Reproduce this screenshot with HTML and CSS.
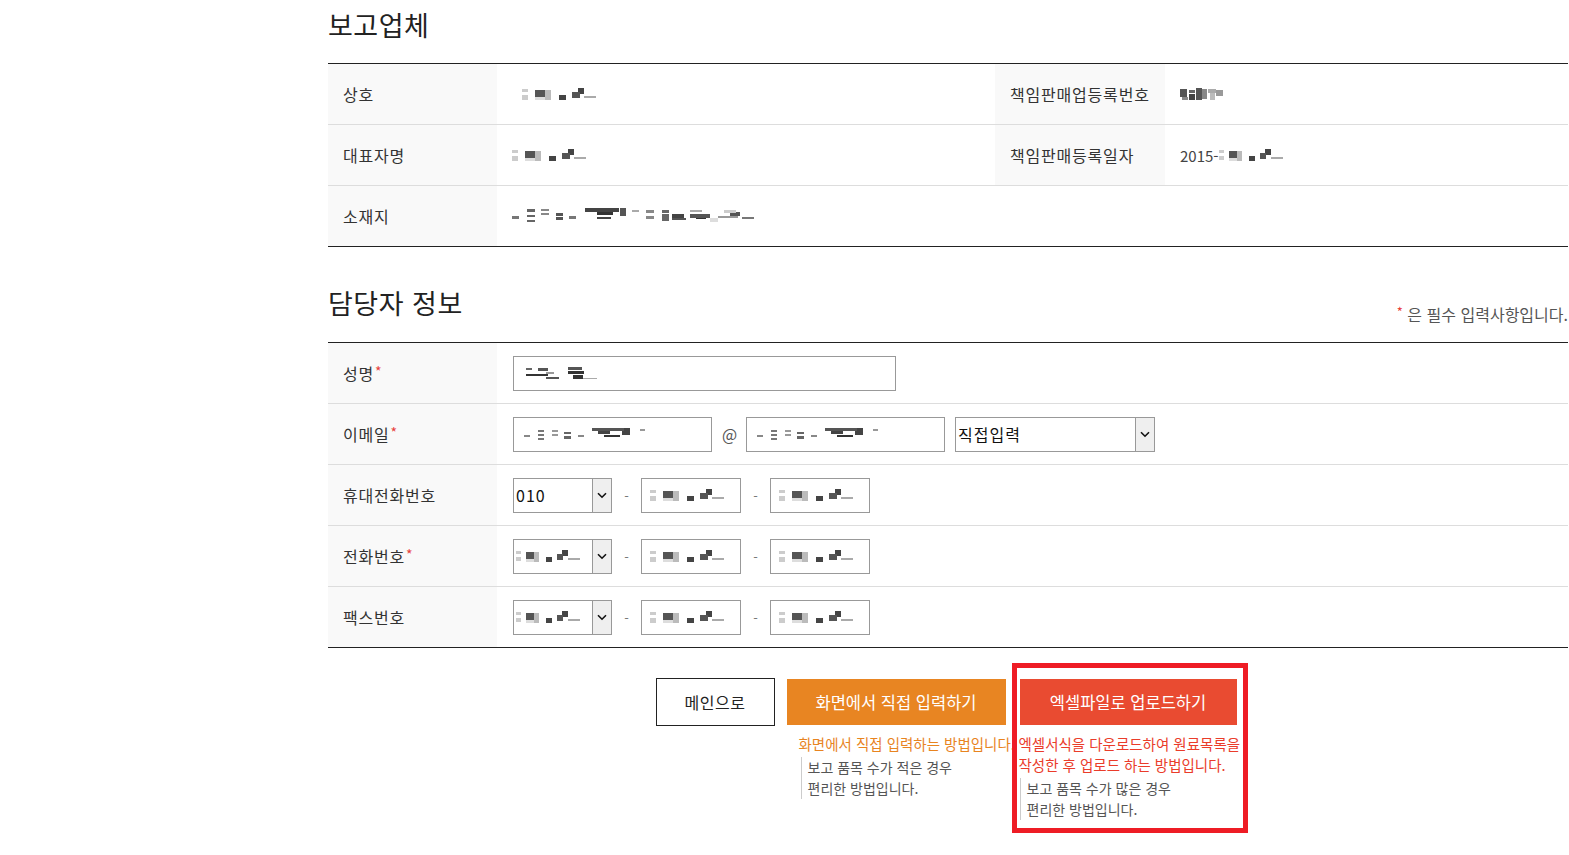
FILE: index.html
```html
<!DOCTYPE html>
<html lang="ko">
<head>
    <meta charset="UTF-8">
    <meta name="viewport" content="width=device-width, initial-scale=1.0">
    <title>보고업체</title>
    <link rel="stylesheet" href="styles.css">
</head>
<body>
    <div class="container">
        <section class="company">
            <h2 class="sec-title">보고업체</h2>
            <div class="info-table">
                <div class="info-row">
                    <div class="th">상호</div>
                    <div class="td"><span class="blot blot-a name-gap"></span></div>
                    <div class="th">책임판매업등록번호</div>
                    <div class="td"><span class="blot blot-e"></span></div>
                </div>
                <div class="info-row">
                    <div class="th">대표자명</div>
                    <div class="td"><span class="blot blot-a"></span></div>
                    <div class="th">책임판매등록일자</div>
                    <div class="td">2015-<span class="blot blot-s"></span></div>
                </div>
                <div class="info-row">
                    <div class="th">소재지</div>
                    <div class="td wide"><span class="blot blot-c"></span></div>
                </div>
            </div>
        </section>

        <section class="manager">
            <div class="sec-head">
                <h2 class="sec-title">담당자 정보</h2>
                <p class="note"><span class="req">*</span> 은 필수 입력사항입니다.</p>
            </div>
            <div class="form-table">
                <div class="form-row">
                    <div class="th">성명<span class="req">*</span></div>
                    <div class="td">
                        <div class="input input-name"><span class="blot blot-d"></span></div>
                    </div>
                </div>
                <div class="form-row">
                    <div class="th">이메일<span class="req">*</span></div>
                    <div class="td">
                        <div class="input input-mail"><span class="blot blot-b"></span></div>
                        <span class="at">@</span>
                        <div class="input input-mail"><span class="blot blot-b"></span></div>
                        <div class="select select-wide">
                            <span class="select-text">직접입력</span>
                            <span class="select-arrow"><svg width="10" height="7" viewBox="0 0 10 7"><path d="M1 1.2l4 4 4-4" fill="none" stroke="#111" stroke-width="1.6"/></svg></span>
                        </div>
                    </div>
                </div>
                <div class="form-row">
                    <div class="th">휴대전화번호</div>
                    <div class="td">
                        <div class="select">
                            <span class="select-text">010</span>
                            <span class="select-arrow"><svg width="10" height="7" viewBox="0 0 10 7"><path d="M1 1.2l4 4 4-4" fill="none" stroke="#111" stroke-width="1.6"/></svg></span>
                        </div>
                        <span class="dash">-</span>
                        <div class="input input-tel"><span class="blot blot-a"></span></div>
                        <span class="dash">-</span>
                        <div class="input input-tel"><span class="blot blot-a"></span></div>
                    </div>
                </div>
                <div class="form-row">
                    <div class="th">전화번호<span class="req">*</span></div>
                    <div class="td">
                        <div class="select">
                            <span class="select-text"><span class="blot blot-s"></span></span>
                            <span class="select-arrow"><svg width="10" height="7" viewBox="0 0 10 7"><path d="M1 1.2l4 4 4-4" fill="none" stroke="#111" stroke-width="1.6"/></svg></span>
                        </div>
                        <span class="dash">-</span>
                        <div class="input input-tel"><span class="blot blot-a"></span></div>
                        <span class="dash">-</span>
                        <div class="input input-tel"><span class="blot blot-a"></span></div>
                    </div>
                </div>
                <div class="form-row">
                    <div class="th">팩스번호</div>
                    <div class="td">
                        <div class="select">
                            <span class="select-text"><span class="blot blot-s"></span></span>
                            <span class="select-arrow"><svg width="10" height="7" viewBox="0 0 10 7"><path d="M1 1.2l4 4 4-4" fill="none" stroke="#111" stroke-width="1.6"/></svg></span>
                        </div>
                        <span class="dash">-</span>
                        <div class="input input-tel"><span class="blot blot-a"></span></div>
                        <span class="dash">-</span>
                        <div class="input input-tel"><span class="blot blot-a"></span></div>
                    </div>
                </div>
            </div>
        </section>

        <div class="btn-area">
            <div class="btn-col col-main">
                <button class="btn btn-line">메인으로</button>
            </div>
            <div class="btn-col col-direct">
                <button class="btn btn-orange">화면에서 직접 입력하기</button>
                <div class="desc desc-direct">
                    <p class="desc-title orange">화면에서 직접 입력하는 방법입니다.</p>
                    <p class="desc-sub">보고 품목 수가 적은 경우<br>편리한 방법입니다.</p>
                </div>
            </div>
            <div class="btn-col col-excel">
                <button class="btn btn-red">엑셀파일로 업로드하기</button>
                <div class="desc desc-excel">
                    <p class="desc-title red">엑셀서식을 다운로드하여 원료목록을<br>작성한 후 업로드 하는 방법입니다.</p>
                    <p class="desc-sub">보고 품목 수가 많은 경우<br>편리한 방법입니다.</p>
                </div>
            </div>
        </div>
    </div>
</body>
</html>
```

FILE: styles.css
```css
body {
    margin: 0;
    padding: 0;
    background: #fff;
    color: #333;
    font-family: "Noto Sans CJK KR", "Noto Sans", sans-serif;
    overflow-x: hidden;
}
p {
    margin: 0;
}
.container {
    width: 1240px;
    margin-left: 328px;
}
.sec-title {
    margin: 7px 0 20px;
    font-size: 27px;
    font-weight: 400;
    letter-spacing: 0.5px;
    line-height: 36px;
    color: #222;
}

/* 보고업체 */
.info-table,
.form-table {
    border-top: 1px solid #222;
    border-bottom: 1px solid #222;
}
.info-row {
    display: grid;
    grid-template-columns: 169px 498px 170px 1fr;
    height: 60px;
}
.info-row + .info-row,
.form-row + .form-row {
    border-top: 1px solid #ddd;
}
.th {
    display: flex;
    align-items: center;
    padding-left: 15px;
    background: #f9f9f9;
    font-size: 16px;
    letter-spacing: 0.8px;
    color: #333;
}
.td {
    display: flex;
    align-items: center;
    padding-left: 15px;
    font-size: 15px;
    color: #444;
}
.td.wide {
    grid-column: span 3;
}
.name-gap {
    margin-left: 10px;
    width: 86px;
}
.req {
    color: #e8413c;
    font-size: 14px;
    letter-spacing: 0;
    align-self: flex-start;
    margin-top: 21px;
    line-height: 14px;
}

/* 담당자 정보 */
.manager {
    margin-top: 38px;
}
.sec-head {
    display: flex;
    justify-content: space-between;
    align-items: flex-end;
    margin-bottom: 17px;
}
.sec-head .sec-title {
    margin: 0 0 4px;
}
.note {
    font-size: 16px;
    line-height: 22px;
    color: #555;
    white-space: nowrap;
}
.note .req {
    margin: 0;
    vertical-align: top;
    font-size: 13px;
    line-height: 18px;
}
.form-row {
    display: grid;
    grid-template-columns: 169px 1fr;
    height: 60px;
}
.form-row .th .req {
    margin-left: 1px;
}
.form-row .td {
    padding-left: 16px;
    gap: 10px;
}
.input {
    box-sizing: border-box;
    height: 35px;
    border: 1px solid #999;
    display: flex;
    align-items: center;
    padding-left: 10px;
    background: #fff;
}
.input-name {
    width: 383px;
    padding-left: 12px;
}
.input-mail {
    width: 199px;
}
.input-tel {
    width: 100px;
    padding-left: 8px;
}
.at {
    font-size: 16px;
    color: #555;
    width: 14px;
    text-align: center;
}
.dash {
    font-size: 13px;
    color: #777;
    width: 5px;
    margin: 0 2px;
    text-align: center;
}
.select {
    box-sizing: border-box;
    width: 99px;
    height: 35px;
    border: 1px solid #999;
    display: flex;
    background: #fff;
}
.select-wide {
    width: 200px;
}
.select-text {
    flex: 1;
    display: flex;
    align-items: center;
    padding-left: 2px;
    font-size: 16px;
    letter-spacing: 1px;
    color: #111;
}
.select-arrow {
    width: 18px;
    border-left: 1px solid #999;
    background: #efefef;
    display: flex;
    align-items: center;
    justify-content: center;
}

/* buttons */
.btn-area {
    display: flex;
    justify-content: center;
    align-items: flex-start;
    margin-top: 15px;
    padding-left: 7px;
}
.btn-col {
    padding-top: 16px;
}
.col-main {
    padding-top: 15px;
    margin-right: 12px;
}
.col-direct {
    width: 219px;
    margin-right: 6px;
}
.col-excel {
    border: 5px solid #ee1c25;
    padding: 11px 6px 8px 3px;
    width: 217px;
}
.btn {
    display: flex;
    align-items: center;
    justify-content: center;
    box-sizing: border-box;
    border: none;
    margin: 0;
    font-family: inherit;
    cursor: pointer;
}
.btn-line {
    width: 119px;
    height: 48px;
    border: 1px solid #222;
    background: #fff;
    color: #222;
    font-size: 16px;
    letter-spacing: 0.5px;
}
.btn-orange,
.btn-red {
    width: 100%;
    height: 46px;
    color: #fff;
    font-size: 16.5px;
}
.btn-orange {
    background: #e88522;
}
.btn-red {
    background: #e94b31;
}
.desc {
    margin-top: 8px;
    font-size: 14.5px;
    line-height: 21px;
    white-space: nowrap;
}
.desc-direct {
    margin-left: 12px;
}
.desc-excel {
    margin-left: -1px;
}
.orange {
    color: #e8841f;
}
.red {
    color: #ea3c2a;
}
.desc-sub {
    margin-top: 3px;
    margin-left: 2px;
    padding-left: 6px;
    border-left: 1px solid #ccc;
    font-size: 14px;
    color: #555;
}
.desc-excel .desc-sub {
    margin-left: 1px;
}

/* blurred values */
.blot {
    display: inline-block;
    vertical-align: middle;
    height: 14px;
    background-repeat: no-repeat;
}
.blot-a {
    width: 80px;
    background-image: linear-gradient(#ccc, #ccc), linear-gradient(#ccc, #ccc), linear-gradient(#555, #555), linear-gradient(#ddd, #ddd), linear-gradient(#bbb, #bbb), linear-gradient(#444, #444), linear-gradient(#555, #555), linear-gradient(#444, #444), linear-gradient(#aaa, #aaa);
    background-position: 0 2px, 0 8px, 13px 3px, 13px 10px, 23px 3px, 37px 8px, 50px 5px, 56px 1px, 62px 9px;
    background-size: 6px 3px, 6px 5px, 10px 7px, 10px 3px, 6px 10px, 7px 5px, 8px 6px, 6px 6px, 12px 2px;
}
.blot-s {
    width: 66px;
    background-image: linear-gradient(#ccc, #ccc), linear-gradient(#ccc, #ccc), linear-gradient(#555, #555), linear-gradient(#ddd, #ddd), linear-gradient(#bbb, #bbb), linear-gradient(#444, #444), linear-gradient(#555, #555), linear-gradient(#444, #444), linear-gradient(#aaa, #aaa);
    background-position: 0 2px, 0 8px, 10px 3px, 10px 10px, 18px 3px, 30px 8px, 41px 5px, 46px 1px, 52px 9px;
    background-size: 5px 3px, 5px 4px, 8px 7px, 8px 3px, 5px 10px, 6px 5px, 6px 6px, 6px 6px, 12px 2px;
}
.blot-b {
    width: 122px;
    background-image: linear-gradient(#888, #888), linear-gradient(#777, #777), linear-gradient(#777, #777), linear-gradient(#777, #777), linear-gradient(#999, #999), linear-gradient(#999, #999), linear-gradient(#666, #666), linear-gradient(#666, #666), linear-gradient(#888, #888), linear-gradient(#555, #555), linear-gradient(#444, #444), linear-gradient(#333, #333), linear-gradient(#444, #444), linear-gradient(#999, #999);
    background-position: 0 8px, 14px 3px, 14px 7px, 14px 11px, 28px 3px, 28px 7px, 40px 5px, 40px 9px, 54px 8px, 68px 1px, 74px 4px, 80px 8px, 98px 1px, 116px 2px;
    background-size: 6px 2px, 6px 2px, 6px 2px, 6px 2px, 6px 2px, 6px 2px, 7px 2px, 7px 3px, 6px 2px, 32px 3px, 12px 3px, 16px 2px, 8px 7px, 5px 2px;
}
.blot-c {
    width: 243px;
    height: 16px;
    background-image: linear-gradient(#777, #777), linear-gradient(#666, #666), linear-gradient(#666, #666), linear-gradient(#666, #666), linear-gradient(#888, #888), linear-gradient(#888, #888), linear-gradient(#555, #555), linear-gradient(#555, #555), linear-gradient(#777, #777), linear-gradient(#444, #444), linear-gradient(#333, #333), linear-gradient(#444, #444), linear-gradient(#555, #555), linear-gradient(#aaa, #aaa), linear-gradient(#888, #888), linear-gradient(#888, #888), linear-gradient(#666, #666), linear-gradient(#666, #666), linear-gradient(#444, #444), linear-gradient(#555, #555), linear-gradient(#aaa, #aaa), linear-gradient(#555, #555), linear-gradient(#333, #333), linear-gradient(#ddd, #ddd), linear-gradient(#999, #999), linear-gradient(#ccc, #ccc), linear-gradient(#555, #555), linear-gradient(#777, #777);
    background-position: 0 8px, 15px 1px, 15px 7px, 15px 12px, 29px 1px, 29px 5px, 44px 5px, 44px 9px, 57px 8px, 73px 0, 85px 4px, 85px 9px, 108px 0, 120px 2px, 134px 2px, 134px 8px, 150px 2px, 150px 6px, 160px 6px, 160px 10px, 178px 2px, 178px 6px, 184px 8px, 198px 10px, 206px 8px, 212px 2px, 218px 4px, 230px 9px;
    background-size: 7px 3px, 8px 3px, 8px 2px, 8px 2px, 8px 2px, 8px 2px, 7px 3px, 7px 3px, 7px 3px, 34px 4px, 16px 3px, 14px 2px, 6px 8px, 7px 2px, 8px 3px, 8px 3px, 7px 3px, 7px 7px, 12px 4px, 14px 2px, 12px 2px, 20px 4px, 10px 3px, 8px 4px, 20px 2px, 12px 3px, 10px 4px, 12px 2px;
}
.blot-d {
    width: 72px;
    background-image: linear-gradient(#666, #666), linear-gradient(#333, #333), linear-gradient(#555, #555), linear-gradient(#999, #999), linear-gradient(#555, #555), linear-gradient(#555, #555), linear-gradient(#333, #333), linear-gradient(#333, #333), linear-gradient(#aaa, #aaa);
    background-position: 0 2px, 0 8px, 12px 2px, 20px 6px, 20px 11px, 42px 1px, 42px 5px, 47px 9px, 57px 12px;
    background-size: 6px 2px, 22px 2px, 10px 3px, 8px 2px, 13px 2px, 14px 3px, 16px 3px, 10px 4px, 14px 1px;
}
.blot-e {
    width: 45px;
    background-image: linear-gradient(#555, #555), linear-gradient(#888, #888), linear-gradient(#666, #666), linear-gradient(#444, #444), linear-gradient(#555, #555), linear-gradient(#888, #888), linear-gradient(#aaa, #aaa), linear-gradient(#bbb, #bbb), linear-gradient(#999, #999);
    background-position: 0 2px, 2px 10px, 9px 3px, 9px 7px, 16px 1px, 22px 2px, 28px 2px, 30px 6px, 36px 3px;
    background-size: 7px 8px, 6px 3px, 6px 3px, 6px 6px, 6px 12px, 5px 10px, 8px 4px, 5px 7px, 7px 6px;
}
```
